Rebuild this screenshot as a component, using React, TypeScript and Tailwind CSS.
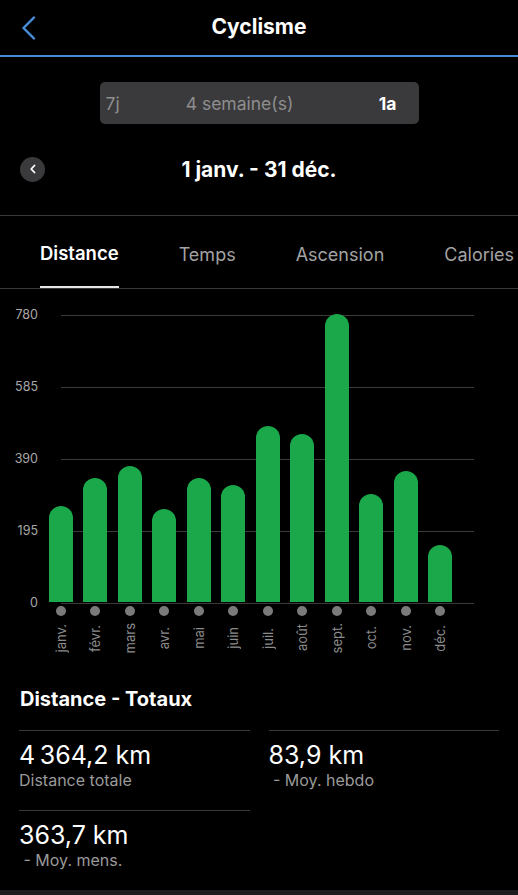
const MONTHS = [
  { label: "janv.", value: 260 },
  { label: "févr.", value: 336 },
  { label: "mars", value: 368 },
  { label: "avr.", value: 252 },
  { label: "mai", value: 336 },
  { label: "juin", value: 317 },
  { label: "juil.", value: 477 },
  { label: "août", value: 455 },
  { label: "sept.", value: 780 },
  { label: "oct.", value: 292 },
  { label: "nov.", value: 355 },
  { label: "déc.", value: 154 },
];

const TICKS = [780, 585, 390, 195, 0];

const TABS = ["Distance", "Temps", "Ascension", "Calories"];

const TOTALS = [
  { value: "4\u202f364,2 km", label: "Distance totale" },
  { value: "83,9 km", label: "\u00a0- Moy. hebdo" },
  { value: "363,7 km", label: "\u00a0- Moy. mens." },
];

const CHART_H = 288;

export default function App() {
  return (
    <div className="flex h-[895px] flex-col overflow-hidden bg-black text-white font-['Inter','Liberation_Sans',sans-serif]">
      {/* Nav bar */}
      <header className="grid h-[57px] grid-cols-[60px_1fr_60px] items-center border-b-2 border-[#4a8ad4]">
        <div className="pl-[21px] pt-[1px]">
          <svg width="15" height="24" viewBox="0 0 15 24" fill="none">
            <path d="M13 1.5 2.5 12 13 22.5" stroke="#4a8fdc" strokeWidth="2.4" strokeLinecap="round" strokeLinejoin="round" />
          </svg>
        </div>
        <h1 className="text-center text-[21px] font-bold leading-[28px]">Cyclisme</h1>
        <div />
      </header>

      {/* Range selector */}
      <div className="mt-[25px] flex justify-center">
        <div className="flex h-[42px] w-[319px] items-center rounded-[5px] bg-[#3a3a3c] px-[6px] pt-[2px] text-[17.5px]">
          <span className="w-[77px] text-[#8e8e8e]">7j</span>
          <span className="w-[114px] text-center text-[#8e8e8e]">4 semaine(s)</span>
          <span className="flex-1 pr-[16px] text-right font-bold">1a</span>
        </div>
      </div>

      {/* Date row */}
      <div className="relative mt-[33px] flex h-[25px] items-center justify-center">
        <div className="absolute left-[20px] top-0 flex h-[25px] w-[25px] items-center justify-center rounded-full bg-[#3a3a3c]">
          <svg width="8" height="10" viewBox="0 0 8 10" fill="none">
            <path d="M5.5 1.5 2.2 5l3.3 3.5" stroke="white" strokeWidth="1.8" strokeLinecap="round" strokeLinejoin="round" />
          </svg>
        </div>
        <span className="text-[21px] font-bold leading-[25px]">1 janv. - 31 déc.</span>
      </div>

      {/* Tabs */}
      <nav className="mt-[33px] flex h-[75px] gap-[60px] overflow-hidden whitespace-nowrap border-y border-[#3a3a3a] pl-[40px] text-[18px]">
        {TABS.map((tab, i) => (
          <div
            key={tab}
            className={`flex items-center pt-[5px] ${i === 0 ? "border-b-2 border-[#e5e5e5] text-[18.5px] font-semibold text-white" : "text-[#a3a3a3]"}`}
          >
            {tab}
          </div>
        ))}
      </nav>

      {/* Chart */}
      <div className="relative mt-[26px] h-[288px]">
        {TICKS.map((t, i) => (
          <div key={t} className="absolute left-0 right-0" style={{ top: i * 72 }}>
            <div className="absolute left-[61px] top-0 h-px w-[413px] bg-[#3a3a3a]" />
            <span className="absolute left-0 top-[-8px] w-[38px] text-right text-[12.5px] leading-[16px] text-[#a8a8a8]">
              {t}
            </span>
          </div>
        ))}
        <div className="absolute bottom-0 left-[49px] top-0 flex w-[403px] items-end justify-between">
          {MONTHS.map((m) => (
            <div
              key={m.label}
              className="w-[24px] rounded-t-full bg-[#1aa84a]"
              style={{ height: (m.value / 780) * CHART_H }}
            />
          ))}
        </div>
      </div>

      {/* Month labels */}
      <div className="ml-[49px] flex w-[403px] justify-between">
        {MONTHS.map((m) => (
          <div key={m.label} className="flex w-[24px] flex-col items-center">
            <div className="mt-[4px] h-[10px] w-[10px] rounded-full bg-[#7a7a7a]" />
            <div className="mt-[2px] flex h-[40px] items-center justify-center">
              <span className="rotate-180 text-[13px] leading-[14px] text-[#8c8c8c] [writing-mode:vertical-rl]">
                {m.label}
              </span>
            </div>
          </div>
        ))}
      </div>

      {/* Totals */}
      <section className="mt-[29px] px-[19px]">
        <h2 className="pl-[1px] text-[20px] font-bold leading-[24px]">Distance - Totaux</h2>
        <div className="mt-[19px] grid grid-cols-2 gap-x-[19px]">
          {TOTALS.map((t) => (
            <div key={t.value} className="border-t border-[#3a3a3a] pb-[20px] pt-[9px]">
              <div className="text-[25px] leading-[30px]">{t.value}</div>
              <div className="text-[16px] leading-[20px] text-[#9a9a9a]">{t.label}</div>
            </div>
          ))}
        </div>
      </section>

      <div className="mt-auto h-[5px] bg-[#1c1c1e]" />
    </div>
  );
}
